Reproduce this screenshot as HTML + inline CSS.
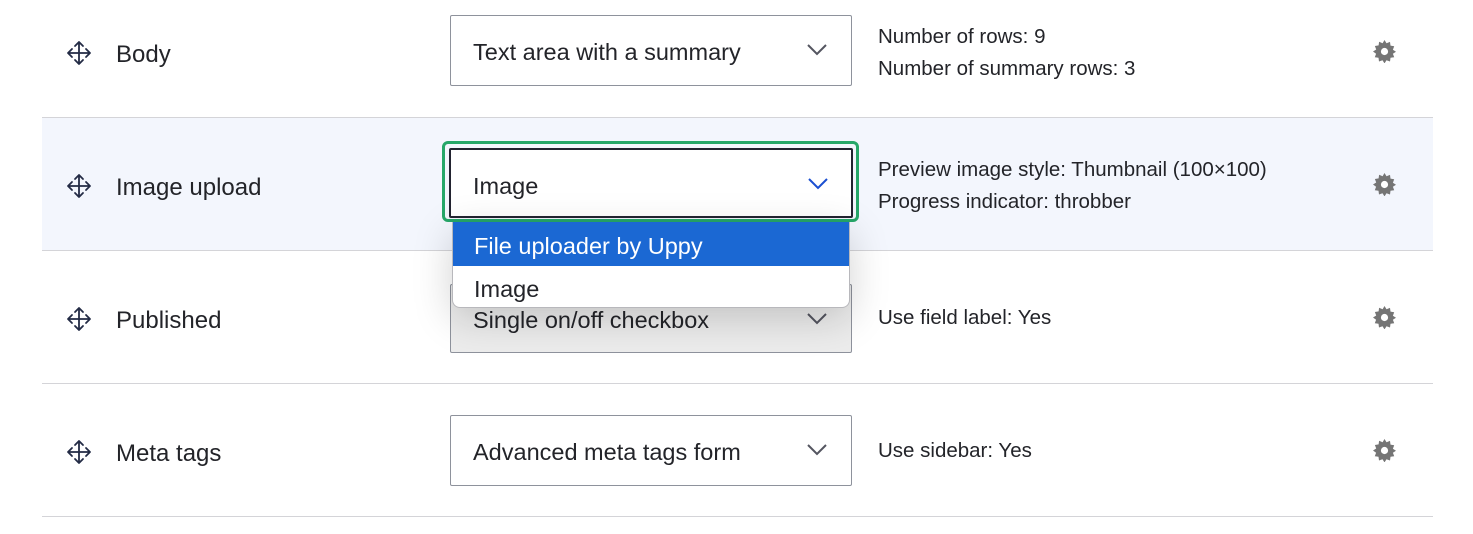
<!DOCTYPE html>
<html><head><style>
body{margin:0;width:1473px;height:534px;background:#fff;font-family:"Liberation Sans",sans-serif;color:#222330;position:relative;overflow:hidden}
.row{position:absolute;left:42px;width:1391px;border-bottom:1px solid #d4d4d8}
.lbl{position:absolute;left:116px;font-size:24px;color:#232429}
.mv{position:absolute;left:66px;width:26px;height:26px}
.sel{position:absolute;left:450px;width:402px;height:70px;border:1px solid #8e929c;border-radius:2px;background:#fff;box-sizing:border-box;font-size:23.5px;padding-left:22px;line-height:72px;color:#232429}
.chev{position:absolute;right:24px;top:28px;width:20px;height:12px}
.sum{position:absolute;left:878px;font-size:20.5px;line-height:32px;color:#232429}
.gear{position:absolute;left:1373px;width:23px;height:23px}
</style></head><body>
<svg width="0" height="0" style="position:absolute"><defs>
<g id="mv" fill="none" stroke="#232b45" stroke-width="1.8" stroke-linecap="round" stroke-linejoin="round"><path d="M13 2V24M2 13H24M9 6l4-4 4 4M9 20l4 4 4-4M6 9l-4 4 4 4M20 9l4 4-4 4"/></g>
<g id="gr"><path fill="#757575" d="M11.5 0l2 3.2 3.5-1.3.5 3.7 3.7.6-1.3 3.5 3.1 2-3.1 2 1.3 3.5-3.7.6-.5 3.7-3.5-1.3-2 3.2-2-3.2-3.5 1.3-.5-3.7-3.7-.6 1.3-3.5L0 11.5l3.2-2-1.3-3.5 3.7-.6.5-3.7L9.6 3.2z"/><circle cx="11.5" cy="11.5" r="3.6" fill="#fff"/></g>
</defs></svg>

<div class="row" style="top:0;height:117px"></div>
<div class="row" style="top:118px;height:132px;background:#f3f6fd"></div>
<div class="row" style="top:251px;height:132px"></div>
<div class="row" style="top:384px;height:132px"></div>

<svg class="mv" style="top:40px"><use href="#mv"/></svg>
<div class="lbl" style="top:41px">Body</div>
<div class="sel" style="top:15px;height:71px">Text area with a summary<svg class="chev" viewBox="0 0 20 12"><path d="M1 1l9 9 9-9" fill="none" stroke="#545560" stroke-width="2"/></svg></div>
<div class="sum" style="top:21px">Number of rows: 9<br>Number of summary rows: 3</div>
<svg class="gear" style="top:40px"><use href="#gr"/></svg>

<svg class="mv" style="top:173px"><use href="#mv"/></svg>
<div class="lbl" style="top:174px">Image upload</div>
<div style="position:absolute;left:442px;top:141px;width:417px;height:81px;border:3px solid #26a769;border-radius:6px;box-sizing:border-box"></div>
<div class="sel" style="top:148px;left:449px;width:404px;height:70px;border:2px solid #222330;line-height:72px">Image<svg class="chev" viewBox="0 0 20 12" style="top:28px;right:23px"><path d="M1 1l9 9 9-9" fill="none" stroke="#1b4fd1" stroke-width="2"/></svg></div>
<div class="sum" style="top:154px">Preview image style: Thumbnail (100×100)<br>Progress indicator: throbber</div>
<svg class="gear" style="top:173px"><use href="#gr"/></svg>

<svg class="mv" style="top:306px"><use href="#mv"/></svg>
<div class="lbl" style="top:307px">Published</div>
<div class="sel" style="top:284px;height:69px;background:#ececec;line-height:70px">Single on/off checkbox<svg class="chev" viewBox="0 0 20 12" style="top:28px"><path d="M1 1l9 9 9-9" fill="none" stroke="#545560" stroke-width="2"/></svg></div>
<div class="sum" style="top:302px">Use field label: Yes</div>
<svg class="gear" style="top:306px"><use href="#gr"/></svg>

<svg class="mv" style="top:439px"><use href="#mv"/></svg>
<div class="lbl" style="top:440px">Meta tags</div>
<div class="sel" style="top:415px;height:71px">Advanced meta tags form<svg class="chev" viewBox="0 0 20 12"><path d="M1 1l9 9 9-9" fill="none" stroke="#545560" stroke-width="2"/></svg></div>
<div class="sum" style="top:435px">Use sidebar: Yes</div>
<svg class="gear" style="top:439px"><use href="#gr"/></svg>

<div style="position:absolute;left:452px;top:222px;width:398px;height:86px;background:#fff;border:1px solid #b8b8bc;border-top:none;border-radius:0 0 8px 8px;box-sizing:border-box;overflow:hidden;box-shadow:0 10px 40px rgba(0,0,0,.18);font-size:23.5px">
<div style="background:#1b68d3;color:#fff;height:44px;line-height:48px;padding-left:21px">File uploader by Uppy</div>
<div style="height:40px;line-height:46px;padding-left:21px;color:#232429">Image</div>
</div>
</body></html>
